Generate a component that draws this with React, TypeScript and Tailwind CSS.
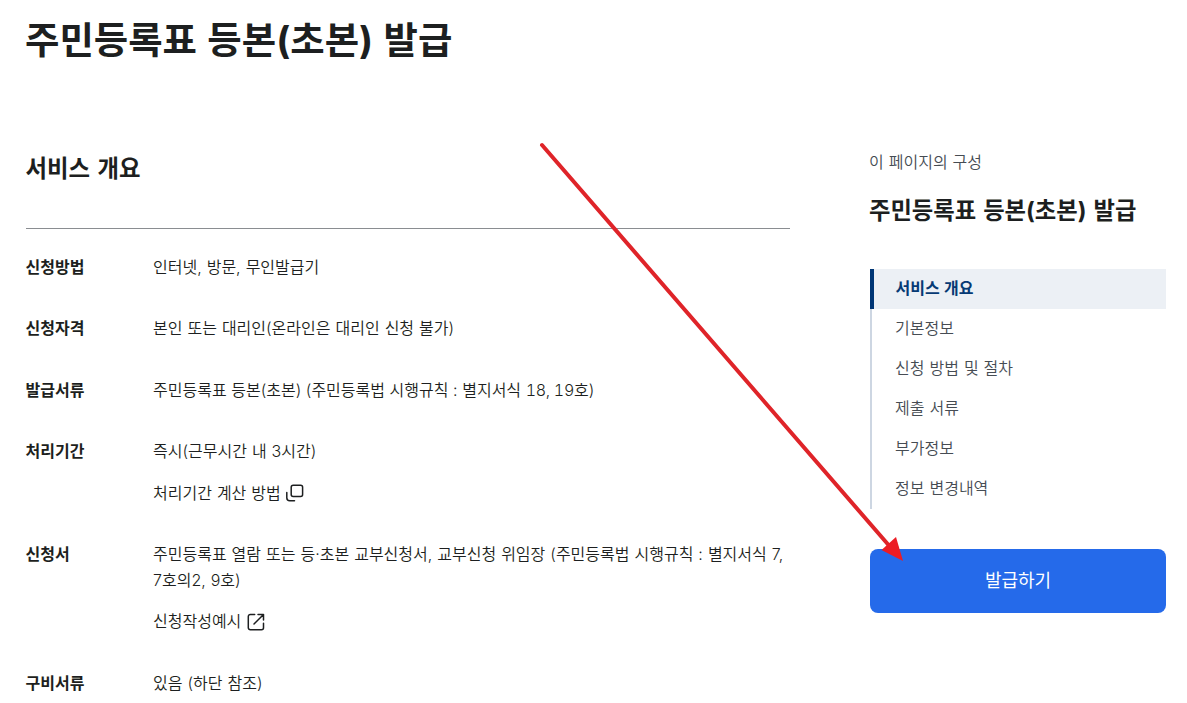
import type { ReactNode } from "react";

const rows: { label: string; content: ReactNode }[] = [
  { label: "신청방법", content: <p>인터넷, 방문, 무인발급기</p> },
  { label: "신청자격", content: <p>본인 또는 대리인(온라인은 대리인 신청 불가)</p> },
  {
    label: "발급서류",
    content: (
      <p className="[word-spacing:0.1px]">
        주민등록표 등본(초본) (주민등록법 시행규칙 : 별지서식 <span className="tracking-[-0.3px] tabular-nums">18, 19</span>호)
      </p>
    ),
  },
  {
    label: "처리기간",
    content: (
      <>
        <p>즉시(근무시간 내 3시간)</p>
        <a className="flex items-center gap-1">
          처리기간 계산 방법 <LayerIcon />
        </a>
      </>
    ),
  },
  {
    label: "신청서",
    content: (
      <>
        <p>
          주민등록표 열람 또는 등·초본 교부신청서, 교부신청 위임장 (주민등록법 시행규칙 : 별지서식 7,
          <br />
          7호의2, 9호)
        </p>
        <a className="flex items-center gap-[5px]">
          신청작성예시 <ExternalIcon />
        </a>
      </>
    ),
  },
  { label: "구비서류", content: <p>있음 (하단 참조)</p> },
];

const sections = ["서비스 개요", "기본정보", "신청 방법 및 절차", "제출 서류", "부가정보", "정보 변경내역"];

function LayerIcon() {
  return (
    <svg className="h-5 w-5" viewBox="0 0 20 20" fill="none" stroke="#1d1f20" strokeWidth="1.5" strokeLinecap="round">
      <rect x="6.2" y="2.2" width="11.4" height="11.2" rx="2" />
      <path d="M1.800 9.500v5.300a3 3 0 0 0 3 3h4.700" />
    </svg>
  );
}

function ExternalIcon() {
  return (
    <svg className="h-5 w-5" viewBox="0 0 20 20" fill="none" stroke="#1d1f20" strokeWidth="1.5" strokeLinecap="round" strokeLinejoin="round">
      <path d="M8.700 2.500H4.300a2 2 0 0 0-2 2v11.200a2 2 0 0 0 2 2h11.200a2 2 0 0 0 2-2v-4.400M12 2.500h5.500V8M17.500 2.500 8 12" />
    </svg>
  );
}

export default function App() {
  return (
    <div className="relative h-[703px] w-[1187px] overflow-hidden bg-white pl-[26px] font-['Inter','Noto_Sans_CJK_KR',sans-serif] text-base leading-[25.5px] text-[#1d1f20] [word-spacing:0.5px]">
      <h1 className="-ml-px pt-[11px] text-[37.4px] font-bold leading-[60px] [word-spacing:1.5px]">주민등록표 등본(초본) 발급</h1>

      <div className="flex gap-20 pt-[79px]">
        <main className="w-[764px]">
          <h2 className="-ml-[0.5px] h-[79px] pt-px text-[23.4px] font-bold leading-9 [word-spacing:2px]">서비스 개요</h2>
          <dl className="-mt-px flex flex-col gap-9 border-t border-[#8a8d91] pt-[25.5px]">
            {rows.map((row) => (
              <div key={row.label} className="-ml-[0.5px] flex">
                <dt className="w-32 shrink-0 font-bold">{row.label}</dt>
                <dd className="-ml-[0.5px] flex flex-col gap-4 whitespace-nowrap font-[350]">{row.content}</dd>
              </div>
            ))}
          </dl>
        </main>

        <aside className="w-[296px]">
          <p className="-ml-px font-[350] text-[#464c53]">이 페이지의 구성</p>
          <h3 className="-ml-px pt-[17px] text-[23.3px] font-bold leading-9 [word-spacing:1.5px]">주민등록표 등본(초본) 발급</h3>
          <ul className="mt-[40.5px]">
            {sections.map((name, i) => (
              <li
                key={name}
                className={
                  i === 0
                    ? "h-10 border-l-4 border-[#003675] bg-[#ecf0f5] pl-[21.5px] font-bold leading-[38px] text-[#063a74]"
                    : "h-10 border-l-2 border-[#cdd6e2] pl-[23px] font-[350] leading-[38px] text-[#464c53]"
                }
              >
                {name}
              </li>
            ))}
          </ul>
          <button className="mt-10 h-16 w-full rounded-lg bg-[#256aea] text-lg text-white">발급하기</button>
        </aside>
      </div>

      {/* Pointer to the issue button */}
      <svg className="pointer-events-none absolute inset-0" width="1187" height="703" viewBox="0 0 1187 703">
        <path d="M542 145 892 549" stroke="#df2429" strokeWidth="4" strokeLinecap="round" />
        <path d="M903 561 881.500 550 896 537Z" fill="#ec1c24" />
      </svg>
    </div>
  );
}
